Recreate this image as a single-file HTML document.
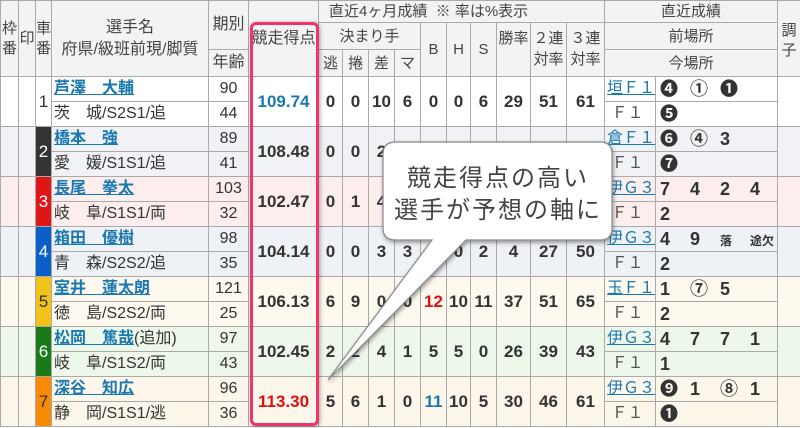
<!DOCTYPE html>
<html><head><meta charset="utf-8">
<style>
*{margin:0;padding:0;box-sizing:border-box}
body{width:800px;height:428px;overflow:hidden;background:#fff;font-family:"Liberation Sans","Noto Sans CJK JP",sans-serif;color:#333;position:relative}
table{border-collapse:collapse;table-layout:fixed;position:absolute;left:0;top:0;width:800px}
td,th{border:1px solid #aaa;font-size:16px;text-align:center;vertical-align:middle;overflow:hidden;white-space:nowrap;font-weight:normal;line-height:1}
th{background:#f3f3f3;color:#444;font-size:15px}
.h1{height:22px}.h2{height:27px}.h3{height:27px}
tr.d td{height:25px}
.b{font-weight:bold;font-size:17px}
.nm{text-align:left;padding-left:2px}
.nm a{color:#1a78b0;font-weight:bold;text-decoration:underline}
.vn{text-align:left;padding-left:2px;color:#555}
.vn a{color:#1a78b0;text-decoration:underline}
.rs{text-align:left;padding-left:4px;font-weight:bold;font-size:18px}
.rs span{display:inline-block;width:30px}
.car{color:#fff;font-size:17px;border-color:#aaa}
.r1{background:#fff}.r2{background:#f1f2f5}.r3{background:#fdeeee}.r4{background:#eef1f6}.r5{background:#fdf9ee}.r6{background:#eef8ea}.r7{background:#fdf6ea}
.red{color:#e01010}.blue{color:#1a78b0}
</style></head><body>
<table>
<colgroup>
<col style="width:18px"><col style="width:17px"><col style="width:16px"><col style="width:157px"><col style="width:40px"><col style="width:70px">
<col style="width:24px"><col style="width:26px"><col style="width:26px"><col style="width:26px"><col style="width:26px"><col style="width:24px"><col style="width:26px"><col style="width:34px"><col style="width:36px"><col style="width:38px">
<col style="width:51px"><col style="width:122px"><col style="width:23px">
</colgroup>
<tr class="h1">
<th rowspan="3" style="line-height:1.3">枠<br>番</th><th rowspan="3">印</th><th rowspan="3" style="line-height:1.3">車<br>番</th>
<th rowspan="3" style="line-height:1.35;font-size:16px">選手名<br>府県/級班前現/脚質</th><th rowspan="2" style="font-size:16px">期別</th><th rowspan="3" style="font-size:16px">競走得点</th>
<th colspan="10" style="text-align:left;padding-left:10px">直近4ヶ月成績&nbsp; ※ 率は%表示</th>
<th colspan="2">直近成績</th><th rowspan="3" style="vertical-align:top;padding-top:20px;line-height:1.3">調<br>子</th></tr>
<tr class="h2"><th colspan="4">決まり手</th><th rowspan="2">B</th><th rowspan="2">H</th><th rowspan="2">S</th><th rowspan="2" style="vertical-align:top;padding-top:8px">勝率</th><th rowspan="2" style="line-height:1.35">２連<br>対率</th><th rowspan="2" style="line-height:1.35">３連<br>対率</th><th colspan="2">前場所</th></tr>
<tr class="h3"><th style="font-size:16px">年齢</th><th>逃</th><th>捲</th><th>差</th><th>マ</th><th colspan="2">今場所</th></tr>

<tr class="d r1"><td rowspan="2"></td><td rowspan="2"></td><td rowspan="2" style="font-size:17px">1</td><td class="nm"><a>芦澤　大輔</a></td><td>90</td><td rowspan="2" class="b blue">109.74</td><td rowspan="2" class="b">0</td><td rowspan="2" class="b">0</td><td rowspan="2" class="b">10</td><td rowspan="2" class="b">6</td><td rowspan="2" class="b">0</td><td rowspan="2" class="b">0</td><td rowspan="2" class="b">6</td><td rowspan="2" class="b">29</td><td rowspan="2" class="b">51</td><td rowspan="2" class="b">61</td><td class="vn"><a>垣Ｆ１</a></td><td class="rs"><span>❹</span><span>①</span><span>❶</span></td><td rowspan="2"></td></tr>
<tr class="d r1"><td class="nm">茨　城/S2S1/追</td><td>44</td><td class="vn">&nbsp;Ｆ１</td><td class="rs"><span>❺</span></td></tr>

<tr class="d r2"><td rowspan="2"></td><td rowspan="2"></td><td rowspan="2" class="car" style="background:#333">2</td><td class="nm"><a>橋本　強</a></td><td>89</td><td rowspan="2" class="b">108.48</td><td rowspan="2" class="b">0</td><td rowspan="2" class="b">0</td><td rowspan="2" class="b">2</td><td rowspan="2" class="b"></td><td rowspan="2" class="b"></td><td rowspan="2" class="b"></td><td rowspan="2" class="b"></td><td rowspan="2" class="b"></td><td rowspan="2" class="b"></td><td rowspan="2" class="b"></td><td class="vn"><a>倉Ｆ１</a></td><td class="rs"><span>❻</span><span>④</span><span>3</span></td><td rowspan="2"></td></tr>
<tr class="d r2"><td class="nm">愛　媛/S1S1/追</td><td>41</td><td class="vn">&nbsp;Ｆ１</td><td class="rs"><span>❼</span></td></tr>

<tr class="d r3"><td rowspan="2"></td><td rowspan="2"></td><td rowspan="2" class="car" style="background:#e01515">3</td><td class="nm"><a>長尾　拳太</a></td><td>103</td><td rowspan="2" class="b">102.47</td><td rowspan="2" class="b">0</td><td rowspan="2" class="b">1</td><td rowspan="2" class="b">4</td><td rowspan="2" class="b"></td><td rowspan="2" class="b"></td><td rowspan="2" class="b"></td><td rowspan="2" class="b"></td><td rowspan="2" class="b"></td><td rowspan="2" class="b"></td><td rowspan="2" class="b"></td><td class="vn"><a>伊Ｇ３</a></td><td class="rs"><span>7</span><span>4</span><span>2</span><span>4</span></td><td rowspan="2"></td></tr>
<tr class="d r3"><td class="nm">岐　阜/S1S1/両</td><td>32</td><td class="vn">&nbsp;Ｆ１</td><td class="rs"><span>2</span></td></tr>

<tr class="d r4"><td rowspan="2"></td><td rowspan="2"></td><td rowspan="2" class="car" style="background:#0b5fc8">4</td><td class="nm"><a>箱田　優樹</a></td><td>98</td><td rowspan="2" class="b">104.14</td><td rowspan="2" class="b">0</td><td rowspan="2" class="b">0</td><td rowspan="2" class="b">3</td><td rowspan="2" class="b">3</td><td rowspan="2" class="b"></td><td rowspan="2" class="b">0</td><td rowspan="2" class="b">2</td><td rowspan="2" class="b">4</td><td rowspan="2" class="b">27</td><td rowspan="2" class="b">50</td><td class="vn"><a>伊Ｇ３</a></td><td class="rs"><span>4</span><span>9</span><span style="font-size:12px">落</span><span style="font-size:12px">途欠</span></td><td rowspan="2"></td></tr>
<tr class="d r4"><td class="nm">青　森/S2S2/追</td><td>35</td><td class="vn">&nbsp;Ｆ１</td><td class="rs"><span>2</span></td></tr>

<tr class="d r5"><td rowspan="2"></td><td rowspan="2"></td><td rowspan="2" class="car" style="background:#f0c21a;color:#333">5</td><td class="nm"><a>室井　蓮太朗</a></td><td>121</td><td rowspan="2" class="b">106.13</td><td rowspan="2" class="b">6</td><td rowspan="2" class="b">9</td><td rowspan="2" class="b">0</td><td rowspan="2" class="b">0</td><td rowspan="2" class="b red">12</td><td rowspan="2" class="b">10</td><td rowspan="2" class="b">11</td><td rowspan="2" class="b">37</td><td rowspan="2" class="b">51</td><td rowspan="2" class="b">65</td><td class="vn"><a>玉Ｆ１</a></td><td class="rs"><span>1</span><span>⑦</span><span>5</span></td><td rowspan="2"></td></tr>
<tr class="d r5"><td class="nm">徳　島/S2S2/両</td><td>25</td><td class="vn">&nbsp;Ｆ１</td><td class="rs"><span>2</span></td></tr>

<tr class="d r6"><td rowspan="2"></td><td rowspan="2"></td><td rowspan="2" class="car" style="background:#1a7a1a">6</td><td class="nm"><a>松岡　篤哉</a>(追加)</td><td>97</td><td rowspan="2" class="b">102.45</td><td rowspan="2" class="b">2</td><td rowspan="2" class="b">2</td><td rowspan="2" class="b">4</td><td rowspan="2" class="b">1</td><td rowspan="2" class="b">5</td><td rowspan="2" class="b">5</td><td rowspan="2" class="b">0</td><td rowspan="2" class="b">26</td><td rowspan="2" class="b">39</td><td rowspan="2" class="b">43</td><td class="vn"><a>伊Ｇ３</a></td><td class="rs"><span>4</span><span>7</span><span>7</span><span>1</span></td><td rowspan="2"></td></tr>
<tr class="d r6"><td class="nm">岐　阜/S1S2/両</td><td>43</td><td class="vn">&nbsp;Ｆ１</td><td class="rs"><span>1</span></td></tr>

<tr class="d r7"><td rowspan="2"></td><td rowspan="2"></td><td rowspan="2" class="car" style="background:#f88a05;color:#333">7</td><td class="nm"><a>深谷　知広</a></td><td>96</td><td rowspan="2" class="b red">113.30</td><td rowspan="2" class="b">5</td><td rowspan="2" class="b">6</td><td rowspan="2" class="b">1</td><td rowspan="2" class="b">0</td><td rowspan="2" class="b blue">11</td><td rowspan="2" class="b">10</td><td rowspan="2" class="b">5</td><td rowspan="2" class="b">30</td><td rowspan="2" class="b">46</td><td rowspan="2" class="b">61</td><td class="vn"><a>伊Ｇ３</a></td><td class="rs"><span>❾</span><span>1</span><span>⑧</span><span>1</span></td><td rowspan="2"></td></tr>
<tr class="d r7"><td class="nm">静　岡/S1S1/逃</td><td>36</td><td class="vn">&nbsp;Ｆ１</td><td class="rs"><span>❶</span></td></tr>
</table>

<div style="position:absolute;left:250px;top:22px;width:69px;height:404px;border:3px solid #f0356b;border-radius:6px;box-shadow:1px 1px 4px rgba(0,0,0,.35)"></div>

<svg style="position:absolute;left:0;top:0" width="800" height="428">
<defs><filter id="sh" x="-20%" y="-20%" width="140%" height="140%"><feDropShadow dx="1" dy="2" stdDeviation="2" flood-opacity="0.4"/></filter></defs>
<path d="M396,142 H600 Q612,142 612,154 V228 Q612,240 600,240 H466 L328,380 L432,240 H396 Q383,240 383,228 V154 Q383,142 396,142 Z" fill="#fff" stroke="#888" stroke-width="1.2" filter="url(#sh)"/>
<text x="498" y="186" text-anchor="middle" font-family="Liberation Sans,Noto Sans CJK JP,sans-serif" font-size="24" fill="#444" letter-spacing="2">競走得点の高い</text>
<text x="498" y="218" text-anchor="middle" font-family="Liberation Sans,Noto Sans CJK JP,sans-serif" font-size="24" fill="#444" letter-spacing="2">選手が予想の軸に</text>
</svg>
</body></html>
